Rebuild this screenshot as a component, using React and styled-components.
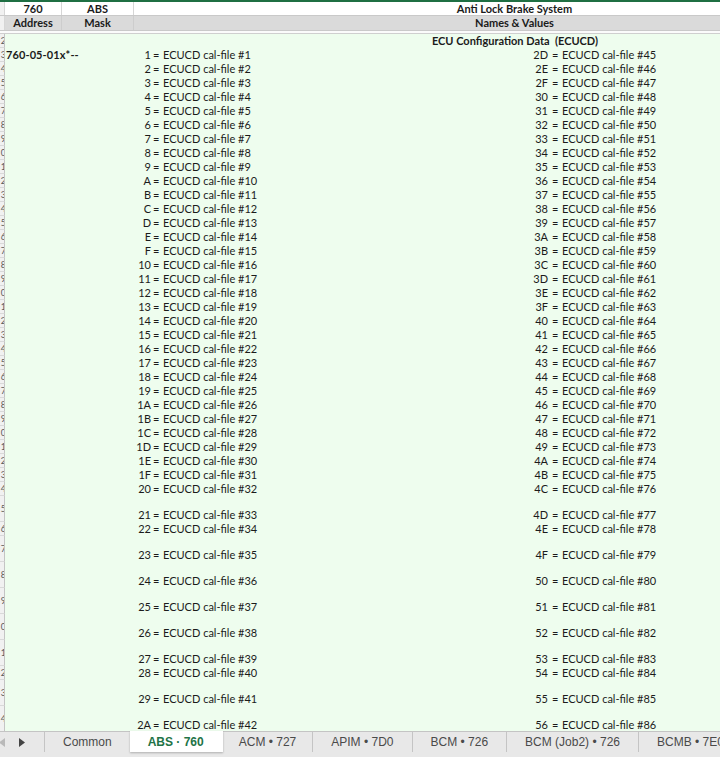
import React from 'react';
import styled, { createGlobalStyle } from 'styled-components';

const GlobalStyle = createGlobalStyle`
  html, body {
    margin: 0;
    padding: 0;
    background: #fff;
    overflow: hidden;
  }
  #root {
    width: 720px;
    height: 757px;
  }
`;

const COLS = '5px 57px 72px 762px';

const Window = styled.div`
  width: 720px;
  height: 757px;
  display: flex;
  flex-direction: column;
  overflow: hidden;
  font-family: Lato, "Noto Sans", sans-serif;
  font-size: 11px;
  color: #1b1b1b;
`;

const Sheet = styled.div`
  flex: 1;
  min-height: 0;
  overflow: hidden;
  border-top: 2px solid #1f6f43;
  background: #eefdee;
`;

const HeadRow = styled.div`
  display: grid;
  grid-template-columns: ${COLS};
  height: ${(p) => p.$h}px;
  box-sizing: border-box;
  border-bottom: 1px solid #c9c9c9;
  background: ${(p) => (p.$shade ? '#dadada' : '#ffffff')};
  font-weight: 700;
  line-height: ${(p) => p.$h - 1}px;
`;

const HeadCell = styled.div`
  text-align: center;
  white-space: nowrap;
  border-right: 1px solid ${(p) => (p.$shade ? '#cdcdcd' : '#d6d6d6')};
  background: ${(p) => (p.$corner ? '#f1f1f1' : 'transparent')};
`;

const FreezeLine = styled.div`
  height: 3px;
  background: #fbfbfb;
  border-bottom: 1px solid #cfcfcf;
  box-sizing: border-box;
`;

const Row = styled.div`
  display: grid;
  grid-template-columns: ${COLS};
  height: ${(p) => p.$h}px;
  align-items: end;
  line-height: 14px;
`;

const RowHead = styled.div`
  align-self: stretch;
  display: flex;
  align-items: center;
  justify-content: flex-end;
  overflow: hidden;
  background: #f1f1f1;
  border-right: 1px solid #c4c4c4;
  border-bottom: 1px solid #d9d9d9;
  box-sizing: border-box;
  font-size: 9px;
  line-height: 9px;
  color: #5a5a5a;

  span {
    margin-right: -2px;
  }
`;

const Address = styled.div`
  grid-column: 2 / 3;
  padding-left: 1px;
  font-weight: 700;
  white-space: nowrap;
  overflow: visible;
  letter-spacing: 0.1px;
`;

const Title = styled.div`
  grid-column: 4 / 5;
  text-align: center;
  font-weight: 700;
  white-space: pre;
`;

const Values = styled.div`
  grid-column: 4 / 5;
  display: grid;
  grid-template-columns: 17px 12px 368px 17px 14px 1fr;
  white-space: nowrap;
`;

const Num = styled.span`
  text-align: right;
`;

const Eq = styled.span`
  padding-left: ${(p) => p.$pad}px;
`;

const TabBar = styled.div`
  flex: none;
  height: 26px;
  display: flex;
  background: #e8e8e8;
  border-top: 1px solid #c4c4c4;
  box-sizing: border-box;
  font-family: "Liberation Sans", Arial, sans-serif;
  font-size: 12px;
  color: #4a4a4a;
  white-space: nowrap;
`;

const Nav = styled.div`
  width: 45px;
  flex: none;
  display: flex;
  align-items: center;
  gap: 14px;
  margin-bottom: 5px;
  border-right: 1px solid #c4c4c4;
  box-sizing: border-box;

  svg {
    display: block;
  }
`;

const Tab = styled.div`
  flex: none;
  display: flex;
  align-items: center;
  padding: 0 ${(p) => p.$pad || 18}px;
  margin-bottom: 5px;
  border-right: 1px solid ${(p) => (p.$active ? 'transparent' : '#c4c4c4')};
  ${(p) =>
    p.$active &&
    `
    margin-top: -1px;
    margin-left: -1px;
    background: #ffffff;
    color: #217346;
    font-weight: 700;
    box-shadow: 0 1px 2px rgba(0, 0, 0, 0.25);
  `}
`;

const hex = (n) => n.toString(16).toUpperCase();

const plainRows = Array.from({ length: 32 }, (_, i) => ({ h: 14, n: i + 1 }));
const spacedRows = [
  [26, 0x21], [14, 0x22], [26, 0x23], [26, 0x24], [26, 0x25],
  [26, 0x26], [26, 0x27], [14, 0x28], [26, 0x29], [26, 0x2a],
].map(([h, n]) => ({ h, n }));
const dataRows = [...plainRows, ...spacedRows];

const tabs = [
  { label: 'Common' },
  { label: 'ABS · 760', active: true },
  { label: 'ACM • 727', pad: 16 },
  { label: 'APIM • 7D0' },
  { label: 'BCM • 726' },
  { label: 'BCM (Job2) • 726' },
  { label: 'BCMB • 7E0' },
];

function Pair({ n }) {
  return (
    <Values>
      <Num>{hex(n)}</Num>
      <Eq $pad={2}>=</Eq>
      <span>ECUCD cal-file #{n}</span>
      <Num>{hex(n + 0x2c)}</Num>
      <Eq $pad={4}>=</Eq>
      <span>ECUCD cal-file #{n + 0x2c}</span>
    </Values>
  );
}

// only the last digit of each row number peeks out of the narrow header strip
const lastDigit = (n) => String(n % 10);

export default function App() {
  return (
    <Window>
      <GlobalStyle />
      <Sheet>
        <HeadRow $h={14}>
          <HeadCell $corner />
          <HeadCell>760</HeadCell>
          <HeadCell>ABS</HeadCell>
          <HeadCell>Anti Lock Brake System</HeadCell>
        </HeadRow>
        <HeadRow $h={15} $shade>
          <HeadCell $corner />
          <HeadCell $shade>Address</HeadCell>
          <HeadCell $shade>Mask</HeadCell>
          <HeadCell $shade>Names &amp; Values</HeadCell>
        </HeadRow>
        <FreezeLine />

        <Row $h={14}>
          <RowHead><span>{lastDigit(72)}</span></RowHead>
          <Title>ECU Configuration Data  (ECUCD)</Title>
        </Row>
        {dataRows.map((r, i) => (
          <Row key={r.n} $h={r.h}>
            <RowHead><span>{lastDigit(73 + i)}</span></RowHead>
            {i === 0 && <Address>760-05-01x*--</Address>}
            <Pair n={r.n} />
          </Row>
        ))}
      </Sheet>

      <TabBar>
        <Nav>
          <svg width="6" height="9" viewBox="0 0 6 9" style={{ marginLeft: -1 }}>
            <polygon points="6,0 6,9 0,4.5" fill="#b9b9b9" />
          </svg>
          <svg width="6" height="9" viewBox="0 0 6 9">
            <polygon points="0,0 0,9 6,4.5" fill="#444" />
          </svg>
        </Nav>
        {tabs.map((t) => (
          <Tab key={t.label} $active={t.active} $pad={t.pad}>
            {t.label}
          </Tab>
        ))}
      </TabBar>
    </Window>
  );
}
